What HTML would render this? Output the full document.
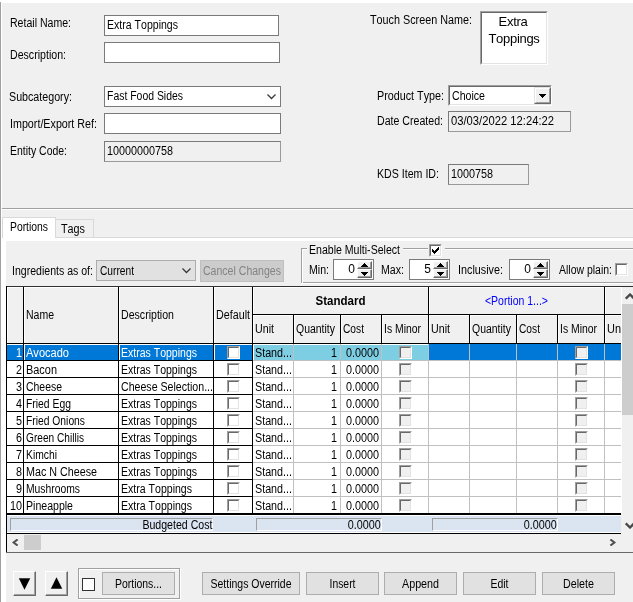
<!DOCTYPE html>
<html><head><meta charset="utf-8"><title>Product</title>
<style>
html,body{margin:0;padding:0}
body{width:633px;height:602px;overflow:hidden;background:#f0f0f0;position:relative;font-family:"Liberation Sans",sans-serif;font-size:12px;line-height:13px;color:#000;font-kerning:none}
div,span{position:absolute;box-sizing:border-box;white-space:nowrap}
.in{background:#fff;border:1px solid #7a7a7a}
.ro{background:#f0f0f0;border:1px solid #7a7a7a;border-right-color:#9a9a9a;border-bottom-color:#9a9a9a}
.btn{background:#e1e1e1;border:1px solid #adadad;text-align:center}
.hl{height:1px;overflow:hidden}
.vl{width:1px;overflow:hidden}
.cb{width:13px;height:13px;background:#fff;border-top:1px solid #a0a0a0;border-left:1px solid #a0a0a0;border-right:1px solid #fff;border-bottom:1px solid #fff}
.cb i{position:absolute;left:0;top:0;width:11px;height:11px;box-sizing:border-box;border-top:1px solid #696969;border-left:1px solid #696969;border-right:1px solid #e3e3e3;border-bottom:1px solid #e3e3e3}
.cb.g{background:#f0f0f0}
.nud{background:#fff;border:1px solid #7a7a7a}
.w{color:#fff}
#app{left:0;top:0;width:633px;height:602px;overflow:hidden;will-change:transform}
</style></head>
<body>
<div id="app">
<div class="" style="left:0px;top:0px;width:633px;height:3px;background:#fff"></div>
<div class="vl" style="left:0px;top:2px;width:1px;height:600px;background:#a0a0a0"></div>
<div class="vl" style="left:1px;top:2px;width:1px;height:600px;background:#fff"></div>
<div class="hl" style="left:2px;top:208px;width:631px;height:1px;background:#a0a0a0"></div>
<div class="hl" style="left:2px;top:209px;width:631px;height:1px;background:#fff"></div>
<span class="" style="left:10px;top:17px;;transform:scaleX(0.8795);transform-origin:left 50%;">Retail Name:</span>
<span class="" style="left:10px;top:49px;;transform:scaleX(0.8838);transform-origin:left 50%;">Description:</span>
<span class="" style="left:9px;top:91px;;transform:scaleX(0.8909);transform-origin:left 50%;">Subcategory:</span>
<span class="" style="left:10px;top:118px;;transform:scaleX(0.8935);transform-origin:left 50%;">Import/Export Ref:</span>
<span class="" style="left:10px;top:145px;;transform:scaleX(0.8719);transform-origin:left 50%;">Entity Code:</span>
<div class="in" style="left:104px;top:15px;width:175px;height:21px;"><span style="left:2px;top:3px;transform:scaleX(0.8796);transform-origin:left 50%;">Extra Toppings</span></div>
<div class="in" style="left:104px;top:42px;width:176px;height:21px;"></div>
<div class="in" style="left:104px;top:86px;width:177px;height:21px;"><span style="left:2px;top:3px;transform:scaleX(0.8698);transform-origin:left 50%;">Fast Food Sides</span><svg style="position:absolute;right:4px;top:7px" width="9" height="6" viewBox="0 0 9 6"><path d="M0.5 0.5 L4.5 4.5 L8.5 0.5" fill="none" stroke="#3a3a3a" stroke-width="1.3"/></svg></div>
<div class="in" style="left:104px;top:113px;width:177px;height:21px;"></div>
<div class="ro" style="left:104px;top:141px;width:177px;height:21px;"><span style="left:2px;top:3px;transform:scaleX(0.8989);transform-origin:left 50%;">10000000758</span></div>
<span class="" style="left:370px;top:14px;;transform:scaleX(0.8995);transform-origin:left 50%;">Touch Screen Name:</span>
<div class="" style="left:480px;top:11px;width:68px;height:54px;background:#fff;border-top:1px solid #a0a0a0;border-left:1px solid #a0a0a0;border-right:1px solid #fff;border-bottom:1px solid #fff"><div style="left:0;top:0;width:66px;height:52px;border-top:1px solid #696969;border-left:1px solid #696969;border-right:1px solid #e3e3e3;border-bottom:1px solid #e3e3e3"></div><span style="left:-1px;top:1px;width:66px;text-align:center;font-size:13px;line-height:17px;letter-spacing:-0.3px">Extra</span><span style="left:0;top:18px;width:66px;text-align:center;font-size:13px;line-height:17px;letter-spacing:-0.3px">Toppings</span></div>
<span class="" style="left:377px;top:90px;;transform:scaleX(0.8969);transform-origin:left 50%;">Product Type:</span>
<div class="" style="left:448px;top:85px;width:104px;height:21px;background:#fff;border-top:1px solid #a0a0a0;border-left:1px solid #a0a0a0;border-right:1px solid #fff;border-bottom:1px solid #fff"><div style="left:0;top:0;width:102px;height:19px;border-top:1px solid #696969;border-left:1px solid #696969;border-right:1px solid #e3e3e3;border-bottom:1px solid #e3e3e3"></div><span style="left:3px;top:4px;transform:scaleX(0.8833);transform-origin:left 50%;">Choice</span><div style="left:85px;top:1px;width:17px;height:17px;background:#f0f0f0;border-top:1px solid #e3e3e3;border-left:1px solid #e3e3e3;border-right:1px solid #696969;border-bottom:1px solid #696969"><div style="left:0;top:0;width:15px;height:15px;border-top:1px solid #fff;border-left:1px solid #fff;border-right:1px solid #a0a0a0;border-bottom:1px solid #a0a0a0"></div><svg style="position:absolute;left:4px;top:6px" width="7" height="4" viewBox="0 0 7 4" shape-rendering="crispEdges"><path d="M0 0h7v1h-1v1h-1v1h-1v1h-1v-1h-1v-1h-1v-1h-1z" fill="#000"/></svg></div></div>
<span class="" style="left:377px;top:115px;;transform:scaleX(0.8833);transform-origin:left 50%;">Date Created:</span>
<div class="ro" style="left:448px;top:111px;width:123px;height:21px;"><span style="left:2px;top:3px;transform:scaleX(0.9354);transform-origin:left 50%;">03/03/2022 12:24:22</span></div>
<span class="" style="left:377px;top:168px;;transform:scaleX(0.8855);transform-origin:left 50%;">KDS Item ID:</span>
<div class="ro" style="left:448px;top:164px;width:81px;height:21px;"><span style="left:2px;top:3px;transform:scaleX(0.8990);transform-origin:left 50%;">1000758</span></div>
<div class="hl" style="left:2px;top:237px;width:631px;height:1px;background:#d9d9d9"></div>
<div class="" style="left:2px;top:238px;width:631px;height:364px;background:#fff"></div>
<div class="" style="left:6px;top:241px;width:627px;height:361px;background:#f0f0f0"></div>
<div class="" style="left:55px;top:219px;width:39px;height:18px;background:#f0f0f0;border:1px solid #d9d9d9;border-bottom:none"><span style="left:5px;top:3px;transform:scaleX(0.8993);transform-origin:left 50%;">Tags</span></div>
<div class="" style="left:2px;top:217px;width:54px;height:21px;background:#fff;border:1px solid #d9d9d9;border-bottom:none"><span style="left:7px;top:3px;transform:scaleX(0.8630);transform-origin:left 50%;">Portions</span></div>
<span class="" style="left:12px;top:265px;;transform:scaleX(0.8798);transform-origin:left 50%;">Ingredients as of:</span>
<div class="" style="left:96px;top:260px;width:100px;height:21px;background:#e1e1e1;border:1px solid #adadad"><span style="left:3px;top:4px;transform:scaleX(0.8497);transform-origin:left 50%;">Current</span><svg style="position:absolute;right:4px;top:7px" width="9" height="6" viewBox="0 0 9 6"><path d="M0.5 0.5 L4.5 4.5 L8.5 0.5" fill="none" stroke="#3a3a3a" stroke-width="1.3"/></svg></div>
<div class="" style="left:200px;top:260px;width:84px;height:22px;background:#cccccc;border:1px solid #bfbfbf;color:#838383;text-align:center"><span style="left:-20px;top:4px;width:122px;text-align:center;transform:scaleX(0.8790);transform-origin:center 50%;">Cancel Changes</span></div>
<div class="" style="left:301px;top:248px;width:340px;height:35px;border:1px solid #a0a0a0"></div>
<div class="" style="left:302px;top:249px;width:340px;height:35px;border:1px solid #fff;border-right:none;border-bottom:none"></div>
<div class="hl" style="left:301px;top:283px;width:340px;height:1px;background:#fff"></div>
<div class="" style="left:307px;top:244px;width:96px;height:13px;background:#f0f0f0"><span style="left:2px;top:0;transform:scaleX(0.8802);transform-origin:left 50%;">Enable Multi-Select</span></div>
<div class="" style="left:428px;top:243px;width:17px;height:14px;background:#f0f0f0"></div>
<div class="cb" style="left:429px;top:244px;width:13px;height:13px;"><i></i><svg style="position:absolute;left:2px;top:2px" width="7" height="7" viewBox="0 0 7 7" shape-rendering="crispEdges"><path d="M0 2h1v3h-1zM1 3h1v3h-1zM2 4h1v3h-1zM3 3h1v3h-1zM4 2h1v3h-1zM5 1h1v3h-1zM6 0h1v3h-1z" fill="#000"/></svg></div>
<span class="" style="left:309px;top:264px;;transform:scaleX(0.8822);transform-origin:left 50%;">Min:</span>
<div class="nud" style="left:333px;top:259px;width:41px;height:21px;"><span style="right:18px;top:3px">0</span><div style="left:23px;top:1px;width:15px;height:8px;background:#f0f0f0;border-top:1px solid #fff;border-left:1px solid #fff;border-right:1px solid #696969;border-bottom:1px solid #696969"><div style="left:0;top:0;width:13px;height:6px;border-right:1px solid #a0a0a0;border-bottom:1px solid #a0a0a0"></div><svg style="position:absolute;left:3px;top:1px" width="7" height="4" viewBox="0 0 7 4" shape-rendering="crispEdges"><path d="M3 0h1v1h1v1h1v1h1v1h-7v-1h1v-1h1v-1h1z" fill="#000"/></svg></div><div style="left:23px;top:9px;width:15px;height:9px;background:#f0f0f0;border-top:1px solid #fff;border-left:1px solid #fff;border-right:1px solid #696969;border-bottom:1px solid #696969"><div style="left:0;top:0;width:13px;height:7px;border-right:1px solid #a0a0a0;border-bottom:1px solid #a0a0a0"></div><svg style="position:absolute;left:3px;top:2px" width="7" height="4" viewBox="0 0 7 4" shape-rendering="crispEdges"><path d="M0 0h7v1h-1v1h-1v1h-1v1h-1v-1h-1v-1h-1v-1h-1z" fill="#000"/></svg></div></div>
<span class="" style="left:381px;top:264px;;transform:scaleX(0.8841);transform-origin:left 50%;">Max:</span>
<div class="nud" style="left:409px;top:259px;width:41px;height:21px;"><span style="right:18px;top:3px">5</span><div style="left:23px;top:1px;width:15px;height:8px;background:#f0f0f0;border-top:1px solid #fff;border-left:1px solid #fff;border-right:1px solid #696969;border-bottom:1px solid #696969"><div style="left:0;top:0;width:13px;height:6px;border-right:1px solid #a0a0a0;border-bottom:1px solid #a0a0a0"></div><svg style="position:absolute;left:3px;top:1px" width="7" height="4" viewBox="0 0 7 4" shape-rendering="crispEdges"><path d="M3 0h1v1h1v1h1v1h1v1h-7v-1h1v-1h1v-1h1z" fill="#000"/></svg></div><div style="left:23px;top:9px;width:15px;height:9px;background:#f0f0f0;border-top:1px solid #fff;border-left:1px solid #fff;border-right:1px solid #696969;border-bottom:1px solid #696969"><div style="left:0;top:0;width:13px;height:7px;border-right:1px solid #a0a0a0;border-bottom:1px solid #a0a0a0"></div><svg style="position:absolute;left:3px;top:2px" width="7" height="4" viewBox="0 0 7 4" shape-rendering="crispEdges"><path d="M0 0h7v1h-1v1h-1v1h-1v1h-1v-1h-1v-1h-1v-1h-1z" fill="#000"/></svg></div></div>
<span class="" style="left:458px;top:264px;;transform:scaleX(0.8994);transform-origin:left 50%;">Inclusive:</span>
<div class="nud" style="left:509px;top:259px;width:41px;height:21px;"><span style="right:18px;top:3px">0</span><div style="left:23px;top:1px;width:15px;height:8px;background:#f0f0f0;border-top:1px solid #fff;border-left:1px solid #fff;border-right:1px solid #696969;border-bottom:1px solid #696969"><div style="left:0;top:0;width:13px;height:6px;border-right:1px solid #a0a0a0;border-bottom:1px solid #a0a0a0"></div><svg style="position:absolute;left:3px;top:1px" width="7" height="4" viewBox="0 0 7 4" shape-rendering="crispEdges"><path d="M3 0h1v1h1v1h1v1h1v1h-7v-1h1v-1h1v-1h1z" fill="#000"/></svg></div><div style="left:23px;top:9px;width:15px;height:9px;background:#f0f0f0;border-top:1px solid #fff;border-left:1px solid #fff;border-right:1px solid #696969;border-bottom:1px solid #696969"><div style="left:0;top:0;width:13px;height:7px;border-right:1px solid #a0a0a0;border-bottom:1px solid #a0a0a0"></div><svg style="position:absolute;left:3px;top:2px" width="7" height="4" viewBox="0 0 7 4" shape-rendering="crispEdges"><path d="M0 0h7v1h-1v1h-1v1h-1v1h-1v-1h-1v-1h-1v-1h-1z" fill="#000"/></svg></div></div>
<span class="" style="left:559px;top:264px;;transform:scaleX(0.8731);transform-origin:left 50%;">Allow plain:</span>
<div class="cb" style="left:615px;top:263px;width:13px;height:13px;"><i></i></div>
<div class="" style="left:6px;top:286px;width:615px;height:267px;background:#fff"></div>
<div class="" style="left:7px;top:287px;width:614px;height:56px;background:#f0f0f0"></div>
<div class="hl" style="left:7px;top:287px;width:614px;height:1px;background:#fff"></div>
<div class="hl" style="left:253px;top:315px;width:368px;height:1px;background:#fff"></div>
<div class="vl" style="left:7px;top:287px;width:1px;height:56px;background:#fff"></div>
<div class="vl" style="left:24px;top:287px;width:1px;height:56px;background:#fff"></div>
<div class="vl" style="left:119px;top:287px;width:1px;height:56px;background:#fff"></div>
<div class="vl" style="left:214px;top:287px;width:1px;height:56px;background:#fff"></div>
<div class="vl" style="left:253px;top:287px;width:1px;height:56px;background:#fff"></div>
<div class="vl" style="left:429px;top:287px;width:1px;height:56px;background:#fff"></div>
<div class="vl" style="left:605px;top:287px;width:1px;height:56px;background:#fff"></div>
<div class="vl" style="left:294px;top:315px;width:1px;height:28px;background:#fff"></div>
<div class="vl" style="left:341px;top:315px;width:1px;height:28px;background:#fff"></div>
<div class="vl" style="left:382px;top:315px;width:1px;height:28px;background:#fff"></div>
<div class="vl" style="left:470px;top:315px;width:1px;height:28px;background:#fff"></div>
<div class="vl" style="left:517px;top:315px;width:1px;height:28px;background:#fff"></div>
<div class="vl" style="left:558px;top:315px;width:1px;height:28px;background:#fff"></div>
<div class="hl" style="left:6px;top:286px;width:627px;height:1px;background:#303030"></div>
<div class="vl" style="left:6px;top:286px;width:1px;height:267px;background:#000"></div>
<div class="vl" style="left:23px;top:287px;width:1px;height:228px;background:#000"></div>
<div class="vl" style="left:118px;top:287px;width:1px;height:228px;background:#000"></div>
<div class="vl" style="left:213px;top:287px;width:1px;height:228px;background:#000"></div>
<div class="vl" style="left:252px;top:287px;width:1px;height:228px;background:#000"></div>
<div class="vl" style="left:428px;top:287px;width:1px;height:57px;background:#000"></div>
<div class="vl" style="left:604px;top:287px;width:1px;height:57px;background:#000"></div>
<div class="vl" style="left:293px;top:315px;width:1px;height:28px;background:#000"></div>
<div class="vl" style="left:340px;top:315px;width:1px;height:28px;background:#000"></div>
<div class="vl" style="left:381px;top:315px;width:1px;height:28px;background:#000"></div>
<div class="vl" style="left:469px;top:315px;width:1px;height:28px;background:#000"></div>
<div class="vl" style="left:516px;top:315px;width:1px;height:28px;background:#000"></div>
<div class="vl" style="left:557px;top:315px;width:1px;height:28px;background:#000"></div>
<div class="hl" style="left:253px;top:314px;width:368px;height:1px;background:#000"></div>
<div class="hl" style="left:7px;top:343px;width:614px;height:1px;background:#000"></div>
<span class="" style="left:26px;top:309px;;transform:scaleX(0.8746);transform-origin:left 50%;">Name</span>
<span class="" style="left:121px;top:309px;;transform:scaleX(0.8829);transform-origin:left 50%;">Description</span>
<span class="" style="left:216px;top:309px;;transform:scaleX(0.8940);transform-origin:left 50%;">Default</span>
<span class="" style="left:253px;top:295px;width:175px;text-align:center;font-weight:bold;transform:scaleX(0.96);transform-origin:center;">Standard</span>
<span class="" style="left:429px;top:295px;width:175px;text-align:center;color:#0000ff;transform:scaleX(0.8744);transform-origin:center 50%;">&lt;Portion 1...&gt;</span>
<span class="" style="left:255px;top:323px;;transform:scaleX(0.8902);transform-origin:left 50%;">Unit</span>
<span class="" style="left:296px;top:323px;;transform:scaleX(0.8724);transform-origin:left 50%;">Quantity</span>
<span class="" style="left:343px;top:323px;;transform:scaleX(0.8506);transform-origin:left 50%;">Cost</span>
<span class="" style="left:384px;top:323px;;transform:scaleX(0.8668);transform-origin:left 50%;">Is Minor</span>
<span class="" style="left:431px;top:323px;;transform:scaleX(0.8902);transform-origin:left 50%;">Unit</span>
<span class="" style="left:472px;top:323px;;transform:scaleX(0.8724);transform-origin:left 50%;">Quantity</span>
<span class="" style="left:519px;top:323px;;transform:scaleX(0.8506);transform-origin:left 50%;">Cost</span>
<span class="" style="left:560px;top:323px;;transform:scaleX(0.8668);transform-origin:left 50%;">Is Minor</span>
<span class="" style="left:607px;top:323px;;transform:scaleX(0.9124);transform-origin:left 50%;">Un</span>
<div class="" style="left:7px;top:345px;width:16px;height:15px;background:#0078d7"></div>
<div class="" style="left:25px;top:345px;width:93px;height:15px;background:#0078d7"></div>
<div class="" style="left:120px;top:345px;width:93px;height:15px;background:#0078d7"></div>
<div class="" style="left:215px;top:345px;width:37px;height:15px;background:#0078d7"></div>
<div class="" style="left:254px;top:345px;width:39px;height:15px;background:#7dcde3"></div>
<div class="" style="left:294px;top:345px;width:46px;height:15px;background:#7dcde3"></div>
<div class="" style="left:341px;top:345px;width:40px;height:15px;background:#7dcde3"></div>
<div class="" style="left:382px;top:345px;width:46px;height:15px;background:#7dcde3"></div>
<div class="" style="left:429px;top:344px;width:40px;height:16px;background:#0078d7"></div>
<div class="" style="left:470px;top:344px;width:46px;height:16px;background:#0078d7"></div>
<div class="" style="left:517px;top:344px;width:40px;height:16px;background:#0078d7"></div>
<div class="" style="left:558px;top:344px;width:46px;height:16px;background:#0078d7"></div>
<div class="" style="left:605px;top:344px;width:16px;height:16px;background:#0078d7"></div>
<div class="hl" style="left:7px;top:360px;width:246px;height:1px;background:#000"></div>
<div class="hl" style="left:253px;top:360px;width:368px;height:1px;background:#c0c0c0"></div>
<span class="w" style="left:7px;top:347px;width:15px;text-align:right;transform:scaleX(0.8972);transform-origin:right 50%;">1</span>
<span class="w" style="left:26px;top:347px;;transform:scaleX(0.9207);transform-origin:left 50%;">Avocado</span>
<span class="w" style="left:121px;top:347px;;transform:scaleX(0.8764);transform-origin:left 50%;">Extras Toppings</span>
<div class="cb" style="left:227px;top:346px;width:13px;height:13px;"><i></i></div>
<span class="" style="left:255px;top:347px;;transform:scaleX(0.8943);transform-origin:left 50%;">Stand...</span>
<span class="" style="left:292px;top:347px;width:45px;text-align:right;transform:scaleX(0.8972);transform-origin:right 50%;">1</span>
<span class="" style="left:340px;top:347px;width:39px;text-align:right;transform:scaleX(0.8991);transform-origin:right 50%;">0.0000</span>
<div class="cb g" style="left:399px;top:346px;width:13px;height:13px;"><i></i></div>
<div class="cb g" style="left:575px;top:346px;width:13px;height:13px;"><i></i></div>
<div class="hl" style="left:7px;top:377px;width:246px;height:1px;background:#000"></div>
<div class="hl" style="left:253px;top:377px;width:368px;height:1px;background:#c0c0c0"></div>
<span class="" style="left:7px;top:364px;width:15px;text-align:right;transform:scaleX(0.8972);transform-origin:right 50%;">2</span>
<span class="" style="left:26px;top:364px;;transform:scaleX(0.9109);transform-origin:left 50%;">Bacon</span>
<span class="" style="left:121px;top:364px;;transform:scaleX(0.8764);transform-origin:left 50%;">Extras Toppings</span>
<div class="cb" style="left:227px;top:363px;width:13px;height:13px;"><i></i></div>
<span class="" style="left:255px;top:364px;;transform:scaleX(0.8943);transform-origin:left 50%;">Stand...</span>
<span class="" style="left:292px;top:364px;width:45px;text-align:right;transform:scaleX(0.8972);transform-origin:right 50%;">1</span>
<span class="" style="left:340px;top:364px;width:39px;text-align:right;transform:scaleX(0.8991);transform-origin:right 50%;">0.0000</span>
<div class="cb g" style="left:399px;top:363px;width:13px;height:13px;"><i></i></div>
<div class="cb g" style="left:575px;top:363px;width:13px;height:13px;"><i></i></div>
<div class="hl" style="left:7px;top:394px;width:246px;height:1px;background:#000"></div>
<div class="hl" style="left:253px;top:394px;width:368px;height:1px;background:#c0c0c0"></div>
<span class="" style="left:7px;top:381px;width:15px;text-align:right;transform:scaleX(0.8972);transform-origin:right 50%;">3</span>
<span class="" style="left:26px;top:381px;;transform:scaleX(0.8701);transform-origin:left 50%;">Cheese</span>
<span class="" style="left:121px;top:381px;;transform:scaleX(0.8841);transform-origin:left 50%;">Cheese Selection...</span>
<div class="cb" style="left:227px;top:380px;width:13px;height:13px;"><i></i></div>
<span class="" style="left:255px;top:381px;;transform:scaleX(0.8943);transform-origin:left 50%;">Stand...</span>
<span class="" style="left:292px;top:381px;width:45px;text-align:right;transform:scaleX(0.8972);transform-origin:right 50%;">1</span>
<span class="" style="left:340px;top:381px;width:39px;text-align:right;transform:scaleX(0.8991);transform-origin:right 50%;">0.0000</span>
<div class="cb g" style="left:399px;top:380px;width:13px;height:13px;"><i></i></div>
<div class="cb g" style="left:575px;top:380px;width:13px;height:13px;"><i></i></div>
<div class="hl" style="left:7px;top:411px;width:246px;height:1px;background:#000"></div>
<div class="hl" style="left:253px;top:411px;width:368px;height:1px;background:#c0c0c0"></div>
<span class="" style="left:7px;top:398px;width:15px;text-align:right;transform:scaleX(0.8972);transform-origin:right 50%;">4</span>
<span class="" style="left:26px;top:398px;;transform:scaleX(0.8649);transform-origin:left 50%;">Fried Egg</span>
<span class="" style="left:121px;top:398px;;transform:scaleX(0.8764);transform-origin:left 50%;">Extras Toppings</span>
<div class="cb" style="left:227px;top:397px;width:13px;height:13px;"><i></i></div>
<span class="" style="left:255px;top:398px;;transform:scaleX(0.8943);transform-origin:left 50%;">Stand...</span>
<span class="" style="left:292px;top:398px;width:45px;text-align:right;transform:scaleX(0.8972);transform-origin:right 50%;">1</span>
<span class="" style="left:340px;top:398px;width:39px;text-align:right;transform:scaleX(0.8991);transform-origin:right 50%;">0.0000</span>
<div class="cb g" style="left:399px;top:397px;width:13px;height:13px;"><i></i></div>
<div class="cb g" style="left:575px;top:397px;width:13px;height:13px;"><i></i></div>
<div class="hl" style="left:7px;top:428px;width:246px;height:1px;background:#000"></div>
<div class="hl" style="left:253px;top:428px;width:368px;height:1px;background:#c0c0c0"></div>
<span class="" style="left:7px;top:415px;width:15px;text-align:right;transform:scaleX(0.8972);transform-origin:right 50%;">5</span>
<span class="" style="left:26px;top:415px;;transform:scaleX(0.8588);transform-origin:left 50%;">Fried Onions</span>
<span class="" style="left:121px;top:415px;;transform:scaleX(0.8764);transform-origin:left 50%;">Extras Toppings</span>
<div class="cb" style="left:227px;top:414px;width:13px;height:13px;"><i></i></div>
<span class="" style="left:255px;top:415px;;transform:scaleX(0.8943);transform-origin:left 50%;">Stand...</span>
<span class="" style="left:292px;top:415px;width:45px;text-align:right;transform:scaleX(0.8972);transform-origin:right 50%;">1</span>
<span class="" style="left:340px;top:415px;width:39px;text-align:right;transform:scaleX(0.8991);transform-origin:right 50%;">0.0000</span>
<div class="cb g" style="left:399px;top:414px;width:13px;height:13px;"><i></i></div>
<div class="cb g" style="left:575px;top:414px;width:13px;height:13px;"><i></i></div>
<div class="hl" style="left:7px;top:445px;width:246px;height:1px;background:#000"></div>
<div class="hl" style="left:253px;top:445px;width:368px;height:1px;background:#c0c0c0"></div>
<span class="" style="left:7px;top:432px;width:15px;text-align:right;transform:scaleX(0.8972);transform-origin:right 50%;">6</span>
<span class="" style="left:26px;top:432px;;transform:scaleX(0.8442);transform-origin:left 50%;">Green Chillis</span>
<span class="" style="left:121px;top:432px;;transform:scaleX(0.8764);transform-origin:left 50%;">Extras Toppings</span>
<div class="cb" style="left:227px;top:431px;width:13px;height:13px;"><i></i></div>
<span class="" style="left:255px;top:432px;;transform:scaleX(0.8943);transform-origin:left 50%;">Stand...</span>
<span class="" style="left:292px;top:432px;width:45px;text-align:right;transform:scaleX(0.8972);transform-origin:right 50%;">1</span>
<span class="" style="left:340px;top:432px;width:39px;text-align:right;transform:scaleX(0.8991);transform-origin:right 50%;">0.0000</span>
<div class="cb g" style="left:399px;top:431px;width:13px;height:13px;"><i></i></div>
<div class="cb g" style="left:575px;top:431px;width:13px;height:13px;"><i></i></div>
<div class="hl" style="left:7px;top:462px;width:246px;height:1px;background:#000"></div>
<div class="hl" style="left:253px;top:462px;width:368px;height:1px;background:#c0c0c0"></div>
<span class="" style="left:7px;top:449px;width:15px;text-align:right;transform:scaleX(0.8972);transform-origin:right 50%;">7</span>
<span class="" style="left:26px;top:449px;;transform:scaleX(0.8607);transform-origin:left 50%;">Kimchi</span>
<span class="" style="left:121px;top:449px;;transform:scaleX(0.8764);transform-origin:left 50%;">Extras Toppings</span>
<div class="cb" style="left:227px;top:448px;width:13px;height:13px;"><i></i></div>
<span class="" style="left:255px;top:449px;;transform:scaleX(0.8943);transform-origin:left 50%;">Stand...</span>
<span class="" style="left:292px;top:449px;width:45px;text-align:right;transform:scaleX(0.8972);transform-origin:right 50%;">1</span>
<span class="" style="left:340px;top:449px;width:39px;text-align:right;transform:scaleX(0.8991);transform-origin:right 50%;">0.0000</span>
<div class="cb g" style="left:399px;top:448px;width:13px;height:13px;"><i></i></div>
<div class="cb g" style="left:575px;top:448px;width:13px;height:13px;"><i></i></div>
<div class="hl" style="left:7px;top:479px;width:246px;height:1px;background:#000"></div>
<div class="hl" style="left:253px;top:479px;width:368px;height:1px;background:#c0c0c0"></div>
<span class="" style="left:7px;top:466px;width:15px;text-align:right;transform:scaleX(0.8972);transform-origin:right 50%;">8</span>
<span class="" style="left:26px;top:466px;;transform:scaleX(0.8945);transform-origin:left 50%;">Mac N Cheese</span>
<span class="" style="left:121px;top:466px;;transform:scaleX(0.8764);transform-origin:left 50%;">Extras Toppings</span>
<div class="cb" style="left:227px;top:465px;width:13px;height:13px;"><i></i></div>
<span class="" style="left:255px;top:466px;;transform:scaleX(0.8943);transform-origin:left 50%;">Stand...</span>
<span class="" style="left:292px;top:466px;width:45px;text-align:right;transform:scaleX(0.8972);transform-origin:right 50%;">1</span>
<span class="" style="left:340px;top:466px;width:39px;text-align:right;transform:scaleX(0.8991);transform-origin:right 50%;">0.0000</span>
<div class="cb g" style="left:399px;top:465px;width:13px;height:13px;"><i></i></div>
<div class="cb g" style="left:575px;top:465px;width:13px;height:13px;"><i></i></div>
<div class="hl" style="left:7px;top:496px;width:246px;height:1px;background:#000"></div>
<div class="hl" style="left:253px;top:496px;width:368px;height:1px;background:#c0c0c0"></div>
<span class="" style="left:7px;top:483px;width:15px;text-align:right;transform:scaleX(0.8972);transform-origin:right 50%;">9</span>
<span class="" style="left:26px;top:483px;;transform:scaleX(0.8614);transform-origin:left 50%;">Mushrooms</span>
<span class="" style="left:121px;top:483px;;transform:scaleX(0.8796);transform-origin:left 50%;">Extra Toppings</span>
<div class="cb" style="left:227px;top:482px;width:13px;height:13px;"><i></i></div>
<span class="" style="left:255px;top:483px;;transform:scaleX(0.8943);transform-origin:left 50%;">Stand...</span>
<span class="" style="left:292px;top:483px;width:45px;text-align:right;transform:scaleX(0.8972);transform-origin:right 50%;">1</span>
<span class="" style="left:340px;top:483px;width:39px;text-align:right;transform:scaleX(0.8991);transform-origin:right 50%;">0.0000</span>
<div class="cb g" style="left:399px;top:482px;width:13px;height:13px;"><i></i></div>
<div class="cb g" style="left:575px;top:482px;width:13px;height:13px;"><i></i></div>
<div class="hl" style="left:7px;top:513px;width:246px;height:1px;background:#000"></div>
<div class="hl" style="left:253px;top:513px;width:368px;height:1px;background:#c0c0c0"></div>
<span class="" style="left:7px;top:500px;width:15px;text-align:right;transform:scaleX(0.8982);transform-origin:right 50%;">10</span>
<span class="" style="left:26px;top:500px;;transform:scaleX(0.8803);transform-origin:left 50%;">Pineapple</span>
<span class="" style="left:121px;top:500px;;transform:scaleX(0.8796);transform-origin:left 50%;">Extra Toppings</span>
<div class="cb" style="left:227px;top:499px;width:13px;height:13px;"><i></i></div>
<span class="" style="left:255px;top:500px;;transform:scaleX(0.8943);transform-origin:left 50%;">Stand...</span>
<span class="" style="left:292px;top:500px;width:45px;text-align:right;transform:scaleX(0.8972);transform-origin:right 50%;">1</span>
<span class="" style="left:340px;top:500px;width:39px;text-align:right;transform:scaleX(0.8991);transform-origin:right 50%;">0.0000</span>
<div class="cb g" style="left:399px;top:499px;width:13px;height:13px;"><i></i></div>
<div class="cb g" style="left:575px;top:499px;width:13px;height:13px;"><i></i></div>
<div class="vl" style="left:293px;top:344px;width:1px;height:170px;background:#c0c0c0"></div>
<div class="vl" style="left:340px;top:344px;width:1px;height:170px;background:#c0c0c0"></div>
<div class="vl" style="left:381px;top:344px;width:1px;height:170px;background:#c0c0c0"></div>
<div class="vl" style="left:428px;top:344px;width:1px;height:170px;background:#c0c0c0"></div>
<div class="vl" style="left:469px;top:344px;width:1px;height:170px;background:#c0c0c0"></div>
<div class="vl" style="left:516px;top:344px;width:1px;height:170px;background:#c0c0c0"></div>
<div class="vl" style="left:557px;top:344px;width:1px;height:170px;background:#c0c0c0"></div>
<div class="vl" style="left:604px;top:344px;width:1px;height:170px;background:#c0c0c0"></div>
<div class="hl" style="left:7px;top:513px;width:614px;height:1px;background:#000"></div>
<div class="hl" style="left:7px;top:514px;width:614px;height:1px;background:#000"></div>
<div class="" style="left:7px;top:516px;width:614px;height:16px;background:#dbe5f1"></div>
<div class="hl" style="left:7px;top:533px;width:614px;height:1px;background:#000"></div>
<div class="" style="left:10px;top:518px;width:203px;height:13px;border-top:1px solid #a0a0a0;border-left:1px solid #a0a0a0;border-right:1px solid #fff;border-bottom:1px solid #fff"><span style="right:0px;top:0px;;transform:scaleX(0.8817);transform-origin:right 50%;">Budgeted Cost</span></div>
<div class="" style="left:256px;top:518px;width:126px;height:13px;border-top:1px solid #a0a0a0;border-left:1px solid #a0a0a0;border-right:1px solid #fff;border-bottom:1px solid #fff"><span style="right:0px;top:0px;;transform:scaleX(0.8991);transform-origin:right 50%;">0.0000</span></div>
<div class="" style="left:432px;top:518px;width:126px;height:13px;border-top:1px solid #a0a0a0;border-left:1px solid #a0a0a0;border-right:1px solid #fff;border-bottom:1px solid #fff"><span style="right:0px;top:0px;;transform:scaleX(0.8991);transform-origin:right 50%;">0.0000</span></div>
<div class="" style="left:7px;top:534px;width:614px;height:18px;background:#f0f0f0"></div>
<div class="" style="left:24px;top:535px;width:17px;height:15px;background:#cdcdcd"></div>
<svg style="position:absolute;left:11px;top:539px" width="8" height="7" viewBox="0 0 8 7"><path d="M6.6 0.4L2.6 3.5L6.6 6.6" fill="none" stroke="#505050" stroke-width="2"/></svg>
<svg style="position:absolute;left:609px;top:539px" width="8" height="7" viewBox="0 0 8 7"><path d="M1.4 0.4L5.4 3.5L1.4 6.6" fill="none" stroke="#505050" stroke-width="2"/></svg>
<div class="hl" style="left:6px;top:552px;width:627px;height:1px;background:#696969"></div>
<div class="" style="left:622px;top:287px;width:11px;height:265px;background:#f0f0f0"></div>
<div class="vl" style="left:621px;top:287px;width:1px;height:226px;background:#fff"></div>
<div class="" style="left:622px;top:304px;width:11px;height:111px;background:#cdcdcd"></div>
<svg style="position:absolute;left:625px;top:293px" width="10" height="7" viewBox="0 0 10 7"><path d="M0.8 5.7L5 1.5L9.2 5.7" fill="none" stroke="#484848" stroke-width="2.3"/></svg>
<svg style="position:absolute;left:625px;top:522px" width="10" height="7" viewBox="0 0 10 7"><path d="M0.8 1.3L5 5.5L9.2 1.3" fill="none" stroke="#484848" stroke-width="2.3"/></svg>
<div class="" style="left:13px;top:571px;width:23px;height:25px;background:#f0f0f0;border-top:1px solid #fff;border-left:1px solid #fff;border-right:1px solid #696969;border-bottom:1px solid #696969"><div style="left:0;top:0;width:21px;height:23px;border-right:1px solid #a0a0a0;border-bottom:1px solid #a0a0a0"></div><span style="left:0;top:3px;width:21px;text-align:center;font-family:'DejaVu Sans',sans-serif;font-size:15px;line-height:17px">&#9660;</span></div>
<div class="" style="left:45px;top:571px;width:23px;height:25px;background:#f0f0f0;border-top:1px solid #fff;border-left:1px solid #fff;border-right:1px solid #696969;border-bottom:1px solid #696969"><div style="left:0;top:0;width:21px;height:23px;border-right:1px solid #a0a0a0;border-bottom:1px solid #a0a0a0"></div><span style="left:0;top:2px;width:21px;text-align:center;font-family:'DejaVu Sans',sans-serif;font-size:15px;line-height:17px">&#9650;</span></div>
<div class="" style="left:78px;top:568px;width:102px;height:31px;border:1px solid #a0a0a0"></div>
<div class="" style="left:79px;top:569px;width:102px;height:31px;border:1px solid #fff;border-top:none;border-left:none"></div>
<div class="" style="left:79px;top:569px;width:100px;height:29px;border:1px solid #fff;border-right:none;border-bottom:none"></div>
<div class="" style="left:82px;top:578px;width:13px;height:13px;background:#fff;border:1px solid #333"></div>
<div class="btn" style="left:102px;top:572px;width:73px;height:23px;"><span style="left:-20px;top:5px;width:111px;text-align:center;transform:scaleX(0.8699);transform-origin:center 50%;">Portions...</span></div>
<div class="btn" style="left:202px;top:572px;width:98px;height:23px;"><span style="left:-20px;top:5px;width:136px;text-align:center;transform:scaleX(0.8736);transform-origin:center 50%;">Settings Override</span></div>
<div class="btn" style="left:306px;top:572px;width:73px;height:23px;"><span style="left:-20px;top:5px;width:111px;text-align:center;transform:scaleX(0.8662);transform-origin:center 50%;">Insert</span></div>
<div class="btn" style="left:384px;top:572px;width:73px;height:23px;"><span style="left:-20px;top:5px;width:111px;text-align:center;transform:scaleX(0.8943);transform-origin:center 50%;">Append</span></div>
<div class="btn" style="left:463px;top:572px;width:73px;height:23px;"><span style="left:-20px;top:5px;width:111px;text-align:center;transform:scaleX(0.8701);transform-origin:center 50%;">Edit</span></div>
<div class="btn" style="left:542px;top:572px;width:73px;height:23px;"><span style="left:-20px;top:5px;width:111px;text-align:center;transform:scaleX(0.8937);transform-origin:center 50%;">Delete</span></div>
</div>
</body></html>
